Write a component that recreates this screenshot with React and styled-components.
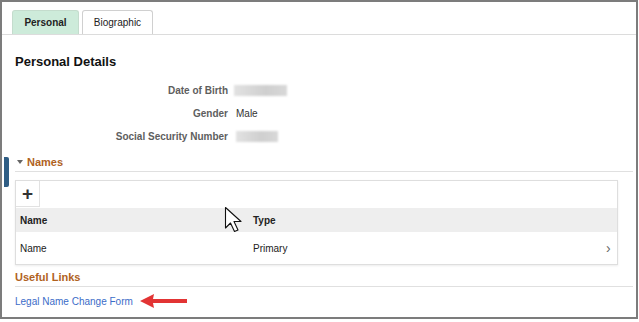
import React from 'react'
import styled, { createGlobalStyle, css } from 'styled-components'

const GlobalStyle = createGlobalStyle`
  body {
    margin: 0;
    background: #fff;
    font-family: "Liberation Sans", Arial, sans-serif;
  }
`

const Frame = styled.div`
  position: relative;
  box-sizing: border-box;
  width: 638px;
  height: 319px;
  border: 2px solid #7c7c7c;
  overflow: hidden;
  background: #fff;
`

const TabBar = styled.div`
  display: flex;
  gap: 3px;
  height: 33px;
  box-sizing: border-box;
  padding: 8px 0 0 10px;
  border-bottom: 1px solid #dcdcdc;
`

const Tab = styled.div`
  display: flex;
  align-items: center;
  justify-content: center;
  width: ${p => p.$w}px;
  height: 24px;
  box-sizing: border-box;
  font-size: 10px;
  color: #222;
  border: 1px solid #d0d0d0;
  border-bottom: none;
  border-radius: 3px 3px 0 0;
  background: #fff;
  ${p =>
    p.$active &&
    css`
      background: #cdebda;
      border-color: #c4dccd;
      font-weight: bold;
    `}
`

const Content = styled.div`
  padding: 0 3px 0 13px;
`

const Heading = styled.h2`
  margin: 19px 0 9px;
  font-size: 13px;
  line-height: 16px;
  font-weight: bold;
  color: #111;
`

const Details = styled.div`
  display: grid;
  grid-template-columns: 213px auto;
  grid-auto-rows: 23px;
  column-gap: 8px;
  align-items: center;
`

const Label = styled.div`
  text-align: right;
  font-size: 10px;
  font-weight: bold;
  color: #5e5e5e;
`

const Value = styled.div`
  font-size: 10px;
  color: #333;
`

const Blurred = styled.div`
  width: ${p => p.$w}px;
  height: 11px;
  margin-left: ${p => p.$ml || 0}px;
  background: linear-gradient(90deg, #e2e2e2, #cfcfcf 60%, #d8d8d8);
  filter: blur(1px);
`

const SectionHeader = styled.div`
  display: flex;
  align-items: center;
  gap: 4px;
  height: ${p => p.$h}px;
  margin-top: ${p => p.$mt}px;
  padding-left: ${p => p.$pl || 0}px;
  border-bottom: 1px solid #e0e0e0;
  font-size: 11px;
  font-weight: bold;
  color: #b0621e;
`

const Caret = styled.span`
  width: 0;
  height: 0;
  border-left: 3px solid transparent;
  border-right: 3px solid transparent;
  border-top: 4px solid #666;
`

const GridBox = styled.div`
  margin: 8px 15px 0 0;
  border: 1px solid #dedede;
  box-shadow: 0 1px 2px rgba(0, 0, 0, 0.08);
`

const Toolbar = styled.div`
  height: 27px;
  box-sizing: border-box;
`

const AddButton = styled.div`
  display: flex;
  align-items: center;
  justify-content: center;
  width: 24px;
  height: 26px;
  box-sizing: border-box;
  border-right: 1px solid #e2e2e2;
  border-bottom: 1px solid #e2e2e2;
  font-size: 19px;
  font-weight: bold;
  color: #333;
`

const Row = styled.div`
  display: grid;
  grid-template-columns: 233px 1fr 11px;
  align-items: center;
  height: ${p => (p.$head ? 24 : 32)}px;
  padding-left: 4px;
  font-size: 10px;
  color: #222;
  font-weight: ${p => (p.$head ? 'bold' : 'normal')};
  background: ${p => (p.$head ? '#eeeeee' : '#fff')};
`

const Chevron = styled.span`
  color: #666;
  font-size: 14px;
  line-height: 1;
`

const LinkText = styled.a`
  display: block;
  margin-top: 8px;
  font-size: 10px;
  line-height: 13px;
  color: #3b6cc8;
  text-decoration: none;
`

const Handle = styled.div`
  position: absolute;
  left: 2px;
  top: 155px;
  width: 5px;
  height: 30px;
  border-radius: 0 2px 2px 0;
  background: #2f5d84;
`

const Overlay = styled.svg`
  position: absolute;
  left: ${p => p.$x}px;
  top: ${p => p.$y}px;
  pointer-events: none;
`

export default function App() {
  return (
    <>
      <GlobalStyle />
      <Frame>
        <TabBar>
          <Tab $active $w={67}>Personal</Tab>
          <Tab $w={71}>Biographic</Tab>
        </TabBar>
        <Content>
          <Heading>Personal Details</Heading>
          <Details>
            <Label>Date of Birth</Label>
            <Blurred $w={53} $ml={-2} />
            <Label>Gender</Label>
            <Value>Male</Value>
            <Label>Social Security Number</Label>
            <Blurred $w={42} />
          </Details>
          <SectionHeader $h={19} $mt={4} $pl={2}>
            <Caret />
            Names
          </SectionHeader>
          <GridBox>
            <Toolbar>
              <AddButton>+</AddButton>
            </Toolbar>
            <Row $head>
              <span>Name</span>
              <span>Type</span>
            </Row>
            <Row>
              <span>Name</span>
              <span>Primary</span>
              <Chevron>›</Chevron>
            </Row>
          </GridBox>
          <SectionHeader $h={19} $mt={2}>
            Useful Links
          </SectionHeader>
          <LinkText href="#">Legal Name Change Form</LinkText>
        </Content>
        <Handle />
        <Overlay $x={136} $y={290} width="52" height="18" viewBox="0 0 52 18">
          <path d="M2 9 L16 2 L15 7 L49 7 L49 11 L15 11 L16 16 Z" fill="#e23434" />
        </Overlay>
        <Overlay $x={222} $y={204} width="22" height="28" viewBox="0 0 22 28">
          <path
            d="M1.5 1.5 L1.5 22 L6.5 17 L10.5 25.5 L14 24 L10 15.5 L17 15.5 Z"
            fill="#fff"
            stroke="#111"
            strokeWidth="1.1"
            strokeLinejoin="round"
          />
        </Overlay>
      </Frame>
    </>
  )
}
